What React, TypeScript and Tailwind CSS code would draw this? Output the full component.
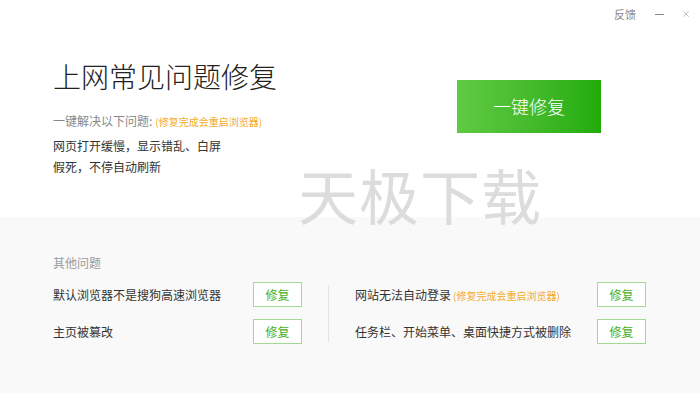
import { X } from 'lucide-react';

const font = { fontFamily: '"Noto Sans CJK SC", "Noto Sans", sans-serif' };

function FixButton() {
  return (
    <button className="w-[49px] h-[25px] border border-[#a3d993] bg-white text-[12px] text-[#45b025] leading-none">
      修复
    </button>
  );
}

export default function App() {
  return (
    <div className="relative w-[700px] h-[393px] bg-white overflow-hidden" style={font}>
      <div className="h-[217px] flex flex-col">
        <div className="h-[28px] flex items-center justify-end pr-[9px] text-[#888]">
          <span className="text-[11px] leading-none mr-[19px]">反馈</span>
          <span className="w-[9px] h-px bg-[#888] mr-[17px]" />
          <X size={10} strokeWidth={1.2} />
        </div>
        <div className="flex pl-[53px] pt-[34px]">
          <div className="w-[404px]">
            <h1 className="text-[28px] leading-[28px] text-[#222] font-light">上网常见问题修复</h1>
            <p className="mt-[21px] leading-[20px] text-[12px] text-[#888]">
              一键解决以下问题:
              <span className="ml-[3px] text-[10px] text-[#f5ac1f]">(修复完成会重启浏览器)</span>
            </p>
            <p className="mt-[3px] text-[12px] leading-[21px] text-[#333]">网页打开缓慢，显示错乱、白屏</p>
            <p className="text-[12px] leading-[21px] text-[#333]">假死，不停自动刷新</p>
          </div>
          <button className="mt-[18px] w-[144px] h-[53px] bg-gradient-to-r from-[#5fca42] to-[#20ac08] text-white text-[18px] font-light">
            一键修复
          </button>
        </div>
      </div>

      <div className="h-[176px] bg-[#f9f9f9] pl-[53px] pt-[38px]">
        <div className="text-[12px] leading-[16px] text-[#999]">其他问题</div>
        <div className="flex mt-[11px]">
          <div className="w-[249px] flex flex-col gap-[12px]">
            <div className="flex items-center justify-between">
              <span className="text-[12px] text-[#333]">默认浏览器不是搜狗高速浏览器</span>
              <FixButton />
            </div>
            <div className="flex items-center justify-between">
              <span className="text-[12px] text-[#333]">主页被篡改</span>
              <FixButton />
            </div>
          </div>
          <div className="ml-[26px] mr-[26px] mt-[3px] w-px h-[57px] bg-[#e4e4e4]" />
          <div className="w-[291px] flex flex-col gap-[12px]">
            <div className="flex items-center justify-between">
              <span className="text-[12px] text-[#333]">
                网站无法自动登录
                <span className="ml-[2px] text-[10px] text-[#f5ac1f]">(修复完成会重启浏览器)</span>
              </span>
              <FixButton />
            </div>
            <div className="flex items-center justify-between">
              <span className="text-[12px] text-[#333]">任务栏、开始菜单、桌面快捷方式被删除</span>
              <FixButton />
            </div>
          </div>
        </div>
      </div>

      <div className="absolute left-[298px] top-[164px] text-[60px] leading-none text-[#dcdcdc] tracking-[1px] pointer-events-none select-none">
        天极下载
      </div>
    </div>
  );
}
